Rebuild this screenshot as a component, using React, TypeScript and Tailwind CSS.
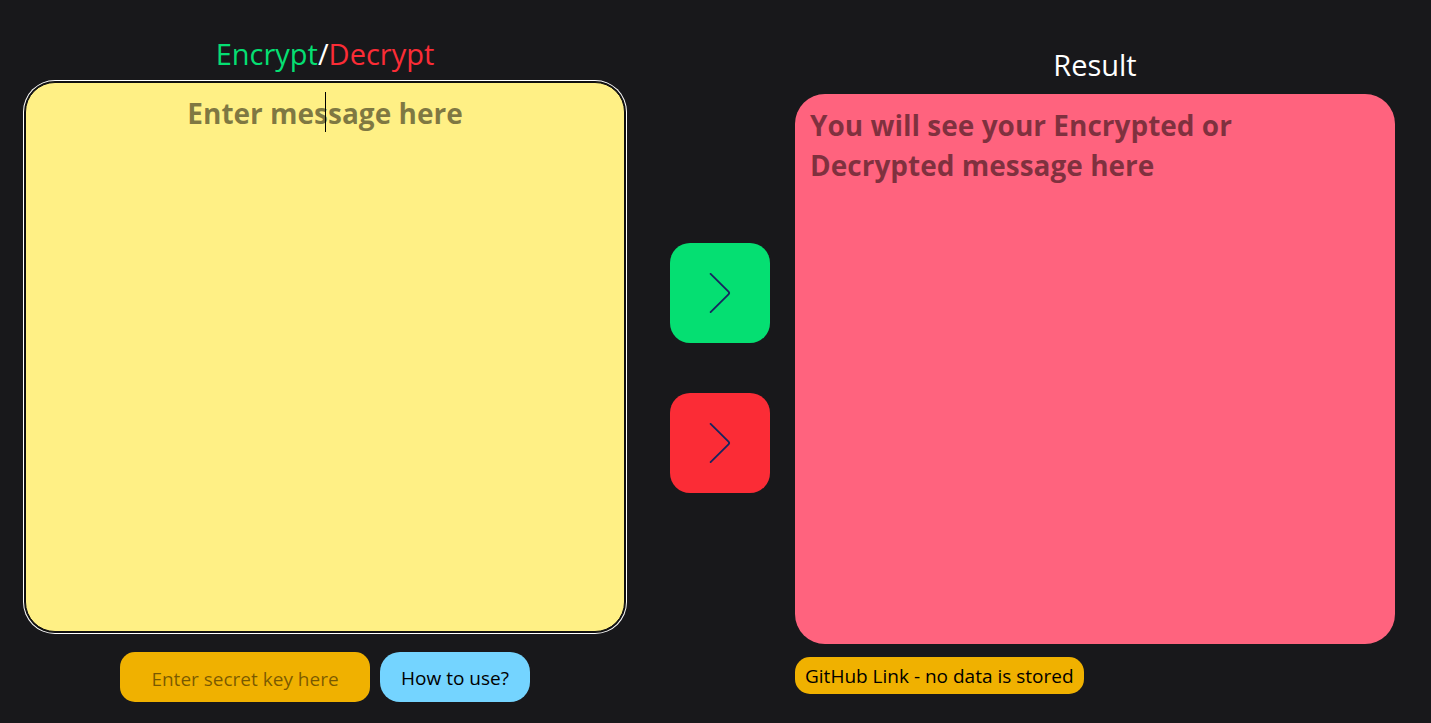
import { useState } from "react";

function shift(text: string, key: string, direction: 1 | -1) {
  if (!key) return text;
  return Array.from(text)
    .map((char, i) =>
      String.fromCharCode((char.charCodeAt(0) + direction * key.charCodeAt(i % key.length) + 65536) % 65536),
    )
    .join("");
}

function Chevron() {
  return (
    <svg
      viewBox="0 0 40 40"
      fill="none"
      stroke="currentColor"
      strokeWidth="1.8"
      strokeLinecap="round"
      strokeLinejoin="round"
      aria-hidden="true"
      className="size-10"
    >
      <path d="M10.6 .9 L28.5 18.7 Q29.8 20 28.5 21.3 L10.6 39.1" />
    </svg>
  );
}

export default function App() {
  const [message, setMessage] = useState("");
  const [secret, setSecret] = useState("");
  const [result, setResult] = useState("");

  return (
    <div className="min-h-screen bg-zinc-900 font-['Open_Sans',sans-serif] text-white">
      <main className="flex flex-col items-center pt-[34px] pr-9 pb-5 pl-[25px] lg:flex-row">
        <section className="flex w-full min-w-0 flex-col items-center lg:flex-1">
          <label htmlFor="message" className="mb-2 text-[29px] leading-10">
            <span className="text-green-400">Encrypt</span>/<span className="text-red-500">Decrypt</span>
          </label>
          <div className="relative w-full">
            <textarea
              id="message"
              value={message}
              onChange={(e) => setMessage(e.target.value)}
              placeholder="Enter message here"
              className="block h-[550px] w-full resize-none rounded-[30px] border border-[#101010] bg-yellow-200 px-4 py-[10px] text-center text-[28px] leading-10 font-bold text-black shadow-[0_0_0_1px_#101010,0_0_0_2px_#ffffff] outline-none placeholder:text-black/50"
            />
            {message === "" && (
              <span aria-hidden="true" className="pointer-events-none absolute top-[10px] left-1/2 h-10 w-px bg-black" />
            )}
          </div>
          <div className="mt-5 flex gap-[10px]">
            <input
              type="text"
              aria-label="Secret key"
              value={secret}
              onChange={(e) => setSecret(e.target.value)}
              placeholder="Enter secret key here"
              className="h-[50px] w-[250px] rounded-[15px] bg-yellow-500 px-3 pt-1 text-center text-[19px] text-black outline-none placeholder:text-black/50"
            />
            <button type="button" className="h-[50px] w-[150px] rounded-[20px] bg-sky-300 pt-0.5 text-[19px] text-black">
              How to use?
            </button>
          </div>
        </section>

        <div className="my-6 flex shrink-0 gap-[50px] lg:my-0 lg:mr-[25px] lg:ml-[45px] lg:flex-col">
          <button
            type="button"
            aria-label="Encrypt"
            onClick={() => setResult(shift(message, secret, 1))}
            className="flex size-[100px] items-center justify-center rounded-[20px] bg-green-400 text-[#17255f]"
          >
            <Chevron />
          </button>
          <button
            type="button"
            aria-label="Decrypt"
            onClick={() => setResult(shift(message, secret, -1))}
            className="flex size-[100px] items-center justify-center rounded-[20px] bg-red-500 text-[#17255f]"
          >
            <Chevron />
          </button>
        </div>

        <section className="flex w-full min-w-0 flex-col items-center lg:mt-1 lg:flex-1">
          <label htmlFor="result" className="mb-[10px] text-[29px] leading-[38px]">
            Result
          </label>
          <textarea
            id="result"
            readOnly
            value={result}
            placeholder="You will see your Encrypted or Decrypted message here"
            className="block h-[550px] w-full resize-none rounded-[30px] bg-rose-400 py-[11px] pr-[130px] pl-[15px] text-[28px] leading-10 font-bold text-black outline-none placeholder:text-black/50"
          />
          <a
            href="https://github.com"
            className="mt-[13px] self-start rounded-[15px] bg-yellow-500 px-[10px] pt-[6px] pb-1 text-[19px] leading-[27px] text-black"
          >
            GitHub Link - no data is stored
          </a>
        </section>
      </main>
    </div>
  );
}
